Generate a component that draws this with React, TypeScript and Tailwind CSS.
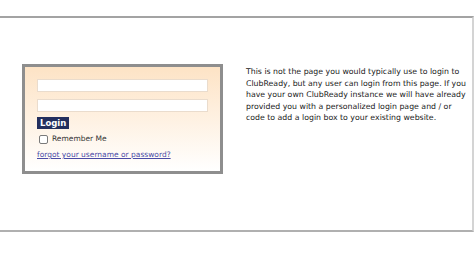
export default function App() {
  return (
    <div className="w-[474px] h-[276px] bg-white overflow-hidden" style={{ fontFamily: '"DejaVu Sans", Verdana, sans-serif' }}>
      <div className="mt-[16px] h-[216px] border-t-2 border-t-[#a3a3a3] border-b-2 border-b-[#b0b0b0] border-r-2 border-r-[#d4d4d4] flex items-start pt-[46px] pl-[22px]">
        {/* login box */}
        <div className="w-[201px] h-[110px] shrink-0 border-[3px] border-[#8e8e8e] bg-gradient-to-b from-[#fde3c5] to-white px-[12px] pt-[12px] leading-none">
          <div className="h-[13px] w-[171px] bg-white border border-[#eadccd]" />
          <div className="mt-[7px] h-[13px] w-[171px] bg-white border border-[#eadccd]" />
          <div className="mt-[5px] w-fit bg-[#232f5e] text-white font-bold text-[8.5px] leading-[12px] px-[3px]">
            Login
          </div>
          <div className="mt-[5px] flex items-center pl-[2px] h-[10px]">
            <div className="w-[9px] h-[9px] border border-[#7a7a7a] rounded-[2px] bg-white" />
            <span className="ml-[4px] text-[7.5px] text-[#333]">Remember Me</span>
          </div>
          <div className="mt-[6px] text-[7.5px] text-[#4b4ba6] underline leading-[10px]">
            forgot your username or password?
          </div>
        </div>
        {/* description */}
        <p className="ml-[23px] mt-[2px] w-[226px] shrink-0 text-[7.8px] leading-[11.5px] text-[#1a1a1a]">
          This is not the page you would typically use to login to ClubReady, but any user can login from this page. If you have your own ClubReady instance we will have already provided you with a personalized login page and / or code to add a login box to your existing website.
        </p>
      </div>
    </div>
  );
}
